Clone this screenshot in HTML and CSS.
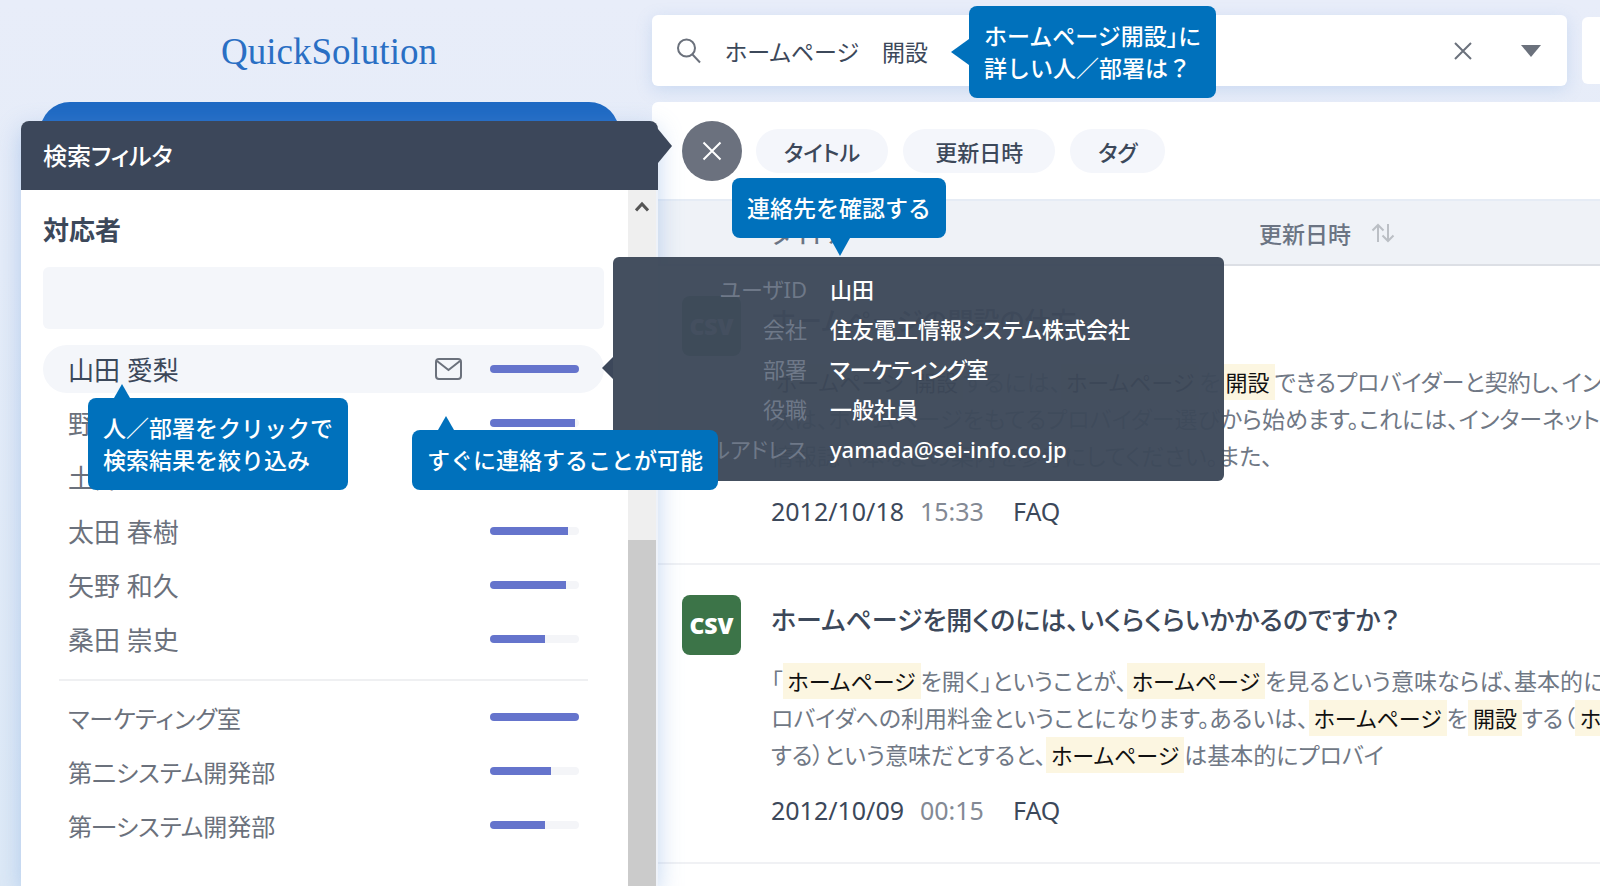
FILE: index.html
```
<!DOCTYPE html>
<html lang="ja">
<head>
<meta charset="utf-8">
<title>QuickSolution</title>
<link rel="stylesheet" href="styles.css">
</head>
<body>
<div class="app">
  <div class="side">
    <div class="brand">QuickSolution</div>
    <div class="side-back"></div>
    <aside class="filter">
      <h2 class="filter-head">検索フィルタ</h2>
      <div class="filter-body">
        <div class="filter-content">
          <label class="filter-label" for="person">対応者</label>
          <input class="filter-input" id="person" type="text">
          <ul class="facets">
            <li class="facet active"><button class="facet-name">山田 愛梨</button>
              <button class="mail" aria-label="メール"><svg viewBox="0 0 30 24" width="30" height="24"><rect x="2" y="2" width="25" height="20" rx="3"/><path d="M3 4l11.500 9L26 4"/></svg></button>
              <span class="bar"><span class="fill" style="width:100%"></span></span>
              <div class="note note-narrow">人／部署をクリックで<br>検索結果を絞り込み</div></li>
            <li class="facet"><button class="facet-name">野村</button><span class="bar"><span class="fill" style="width:96%"></span></span></li>
            <li class="facet"><button class="facet-name">土井</button><span class="bar"><span class="fill" style="width:92%"></span></span></li>
            <li class="facet"><button class="facet-name">太田 春樹</button><span class="bar"><span class="fill" style="width:88%"></span></span></li>
            <li class="facet"><button class="facet-name">矢野 和久</button><span class="bar"><span class="fill" style="width:85%"></span></span></li>
            <li class="facet"><button class="facet-name">桑田 崇史</button><span class="bar"><span class="fill" style="width:62%"></span></span></li>
          </ul>
          <ul class="facets depts">
            <li class="facet"><button class="facet-name">マーケティング室</button><span class="bar"><span class="fill" style="width:100%"></span></span></li>
            <li class="facet"><button class="facet-name">第二システム開発部</button><span class="bar"><span class="fill" style="width:69%"></span></span></li>
            <li class="facet"><button class="facet-name">第一システム開発部</button><span class="bar"><span class="fill" style="width:62%"></span></span></li>
          </ul>
        </div>
        <div class="scroll"><svg viewBox="0 0 14 12" width="14" height="12"><path d="M1 9.500L7 3l6 6.500"/></svg><span class="thumb"></span></div>
      </div>
    </aside>
  </div>

  <main class="main">
    <div class="search-row">
      <form class="search">
        <svg class="glass" viewBox="0 0 26 26" width="26" height="26"><circle cx="10.500" cy="10" r="8.500"/><path d="M16.500 16.500L24 24.500"/></svg>
        <input class="query" type="text" value="ホームページ　開設" aria-label="検索">
        <button type="button" class="icon-btn" aria-label="クリア"><svg viewBox="0 0 20 20" width="20" height="20"><path d="M2 2l16 16M18 2L2 18"/></svg></button>
        <button type="button" class="icon-btn" aria-label="履歴"><svg viewBox="0 0 20 12" width="20" height="12"><path class="solid" d="M0 0h20L10 12z"/></svg></button>
      </form>
      <div class="search-next"></div>
    </div>
    <section class="results">
      <div class="tools">
        <button class="close" aria-label="閉じる"><svg viewBox="0 0 20 20" width="20" height="20"><path d="M1.500 1.500l17 17M18.500 1.500l-17 17"/></svg></button>
        <button class="chip">タイトル</button>
        <button class="chip chip-mid">更新日時</button>
        <button class="chip">タグ</button>
      </div>
      <div class="cols">
        <span class="col-title">タイトル</span>
        <span class="col-date">更新日時 <svg viewBox="0 0 24 20" width="24" height="20"><path d="M7 19V2M1.500 7.500L7 2l5.500 5.500M17 1v17M11.500 12.500L17 18l5.500-5.500"/></svg></span>
      </div>
      <article class="item">
        <span class="file">CSV</span>
        <div class="item-main">
          <h3 class="item-title">ホームページの開設の仕方</h3>
          <p class="text"><mark>ホームページ</mark><mark>開設</mark>するには、<mark>ホームページ</mark>を<mark>開設</mark>できるプロバイダーと契約し、インターネット<br>次は、ホームページをもてるプロバイダー選びから始めます。これには、インターネット関連の<br>情報誌や本などの案内を参考にしてください。また、</p>
          <p class="meta"><span>2012/10/18</span><span class="time">15:33</span><span>FAQ</span></p>
        </div>
      </article>
      <article class="item">
        <span class="file">CSV</span>
        <div class="item-main">
          <h3 class="item-title">ホームページを開くのには、いくらくらいかかるのですか？</h3>
          <p class="text">「<mark>ホームページ</mark>を開く」ということが、<mark>ホームページ</mark>を見るという意味ならば、基本的には、プ<br>ロバイダへの利用料金ということになります。あるいは、<mark>ホームページ</mark>を<mark>開設</mark>する（<mark>ホームページ</mark><br>する）という意味だとすると、<mark>ホームページ</mark>は基本的にプロバイ</p>
          <p class="meta"><span>2012/10/09</span><span class="time">00:15</span><span>FAQ</span></p>
        </div>
      </article>
    </section>
  </main>

  <div class="card">
    <dl>
      <dt>ユーザID</dt><dd>山田</dd>
      <dt>会社</dt><dd>住友電工情報システム株式会社</dd>
      <dt>部署</dt><dd>マーケティング室</dd>
      <dt>役職</dt><dd>一般社員</dd>
      <dt>メールアドレス</dt><dd>yamada@sei-info.co.jp</dd>
    </dl>
  </div>
  <div class="note note-query">ホームページ開設<span class="tight">」</span>に<br>詳しい人／部署は？</div>
  <div class="note note-contact">連絡先を確認する</div>
  <div class="note note-mail">すぐに連絡することが可能</div>
</div>
</body>
</html>
```
FILE: styles.css
```
* { box-sizing: border-box; }
body {
  margin: 0;
  color: #3c485a;
  background: #e6edf9;
  font-family: "Noto Sans", "Noto Sans CJK JP", sans-serif;
  font-size: 25px;
  font-feature-settings: "palt";
  overflow: hidden;
}
button, input { font: inherit; font-feature-settings: inherit; color: inherit; border: 0; padding: 0; background: none; }
h2, h3, p, ul, dl, dd { margin: 0; padding: 0; }
svg { display: block; flex: none; fill: none; stroke: #6b717c; stroke-width: 2; }
.solid { fill: #6b717c; stroke: none; }

.app {
  position: relative;
  display: flex;
  height: 100vh;
  overflow: hidden;
  background: linear-gradient(#e8edf9, #e5ecf8 30%, #dde9f6);
}

.side { width: 652px; flex: none; display: flex; flex-direction: column; }
.brand {
  height: 102px;
  padding-left: 6px;
  line-height: 104px;
  text-align: center;
  color: #2a6fc4;
  font-family: "Liberation Serif", serif;
  font-size: 37px;
}
.side-back { flex: none; height: 60px; margin: 0 33px -41px 40px; border-radius: 30px; background: #1e69c3; }
.filter {
  position: relative;
  z-index: 2;
  flex: 1;
  display: flex;
  flex-direction: column;
  margin: 0 -6px 0 21px;
  border-radius: 8px 8px 0 0;
  background: #fff;
  box-shadow: 0 8px 24px rgba(120, 165, 225, .45);
}
.filter-head {
  position: relative;
  height: 69px;
  padding-left: 22px;
  border-radius: 8px 8px 0 0;
  background: #3c475a;
  color: #fff;
  font-size: 24px;
  font-weight: 500;
  line-height: 69px;
}
.filter-head::after {
  content: "";
  position: absolute;
  left: 100%;
  top: 8px;
  border: solid transparent;
  border-width: 17px 0 17px 14px;
  border-left-color: #3c475a;
}
.filter-body { flex: 1; display: flex; }
.filter-content { flex: 1; padding: 18px 24px 0 22px; }
.filter-label { display: block; height: 44px; line-height: 44px; font-size: 26px; font-weight: 700; }
.filter-input { display: block; width: 100%; height: 62px; margin: 15px 0 16px; border-radius: 6px; background: #f4f6fa; }
.facets { list-style: none; }
.facet { position: relative; display: flex; align-items: center; height: 48px; margin-bottom: 6px; padding: 0 25px; border-radius: 24px; color: #6b717c; font-size: 26px; }
.facet-name { flex: 1; text-align: left; }
.active { background: #f4f6fa; color: #3c485a; }
.mail { margin-right: 26px; }
.bar { width: 89px; height: 8px; border-radius: 4px; background: #f4f5f8; overflow: hidden; }
.fill { display: block; height: 100%; background: #6574cc; }
.depts { position: relative; padding-top: 24px; }
.depts .facet { font-size: 24px; }
.depts::before { content: ""; position: absolute; top: 10px; left: 16px; right: 16px; border-top: 2px solid #eff0f2; }
.scroll { width: 30px; display: flex; flex-direction: column; justify-content: space-between; align-items: center; padding-top: 11px; border-right: 2px solid #eef2f9; background: #efefef; }
.scroll svg { stroke: #555; stroke-width: 3; }
.thumb { width: 100%; height: 346px; background: #cbcbcb; }

.main { flex: 1; min-width: 0; display: flex; flex-direction: column; }
.search-row { display: flex; gap: 15px; padding: 15px 0 16px; }
.search { flex: 1; display: flex; align-items: center; height: 71px; padding: 0 26px 0 24px; border-radius: 6px; background: #fff; box-shadow: 0 4px 16px rgba(120, 165, 225, .25); }
.query { flex: 1; min-width: 0; margin-left: 23px; outline: 0; font-size: 23px; }
.icon-btn { margin-left: 48px; }
.search-next { width: 18px; height: 67px; margin-top: 2px; border-radius: 6px 0 0 6px; background: #fff; }

.results { flex: 1; border-radius: 6px 0 0 0; background: #fff; }
.tools { display: flex; align-items: center; height: 97px; padding-left: 30px; }
.close { display: grid; place-items: center; width: 60px; height: 60px; margin-right: 14px; border-radius: 50%; background: #6b717e; }
.close svg { stroke: #fff; }
.chip { height: 44px; margin-right: 15px; padding: 0 28px; border-radius: 22px; background: #f4f6fb; font-size: 22px; font-weight: 500; }
.chip-mid { padding: 0 32px; }
.cols { display: flex; align-items: center; height: 67px; padding-left: 119px; border-top: 2px solid #e6ecf5; border-bottom: 2px solid #dcdfe5; background: #eff2f7; color: #6b7483; font-size: 23px; font-weight: 500; }
.col-title { width: 488px; flex: none; }
.col-date { display: flex; align-items: center; gap: 20px; }
.col-date svg { stroke: #bbbfc5; }
.item { display: flex; gap: 30px; height: 299px; padding: 30px 0 0 30px; border-bottom: 2px solid #f0f1f4; overflow: hidden; }
.file { display: grid; place-items: center; flex: none; width: 59px; height: 60px; border-radius: 8px; background: #3c7448; color: #fff; font-size: 23px; font-weight: 900; }
.item-main { flex: 1; min-width: 0; }
.item-title { line-height: 50px; font-size: 26px; font-weight: 500; }
.text { margin-top: 18px; color: #707885; font-size: 23px; line-height: 37px; white-space: nowrap; }
mark { padding: 3px 5px; background: #fcf6e1; color: #111; font-size: 22px; }
.meta { display: flex; margin-top: 16px; line-height: 40px; }
.meta span { margin-right: 29px; }
.meta span:first-child { margin-right: 16px; }
.meta .time { color: #838994; }

.card { position: absolute; z-index: 4; left: 613px; top: 257px; width: 611px; padding: 12px 0; border-radius: 6px; background: rgba(62, 73, 90, .97); }
.card::before { content: ""; position: absolute; right: 100%; top: 100px; border: solid transparent; border-width: 11px 11px 11px 0; border-right-color: #3c475a; }
.card dl { display: grid; grid-template-columns: 194px 1fr; column-gap: 23px; line-height: 40px; font-size: 22px; }
.card dt { text-align: right; white-space: nowrap; color: #6e7888; }
.card dd { color: #fff; font-weight: 500; }

.note { position: absolute; z-index: 6; padding: 14px 15px; border-radius: 8px; background: #0071bc; color: #fff; font-size: 23px; font-feature-settings: normal; font-weight: 500; line-height: 32px; white-space: nowrap; }
.tight { font-feature-settings: "palt"; }
.note::after { content: ""; position: absolute; border: solid transparent; }
.note-query { left: 969px; top: 6px; }
.note-query::after { right: 100%; top: 33px; border-width: 13px 18px 13px 0; border-right-color: #0071bc; }
.note-contact { left: 732px; top: 178px; }
.note-contact::after { left: 98px; top: 100%; border-width: 18px 10px 0; border-top-color: #0071bc; }
.note-mail { left: 412px; top: 430px; }
.note-mail::after { left: 26px; bottom: 100%; border-width: 0 8px 14px; border-bottom-color: #0071bc; }
.note-narrow { left: 45px; top: 53px; }
.note-narrow::after { left: 26px; bottom: 100%; border-width: 0 8px 14px; border-bottom-color: #0071bc; }
```
